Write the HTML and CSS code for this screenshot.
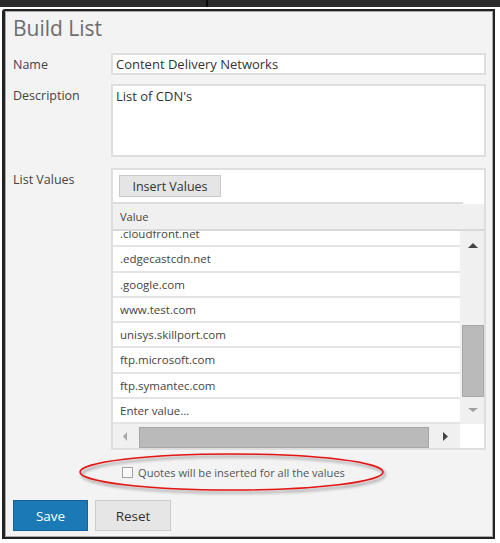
FILE: index.html
```html
<!DOCTYPE html>
<html>
<head>
<meta charset="utf-8">
<link rel="stylesheet" href="styles.css">
</head>
<body>
<div class="topbar"><span class="topbar-gap"></span><span class="topbar-line"></span></div>
<div class="frame">
  <div class="panel">
    <h1 class="title">Build List</h1>
    <div class="form">
      <label class="label">Name</label>
      <div class="field input">Content Delivery Networks</div>

      <label class="label">Description</label>
      <div class="field textarea">List of CDN's</div>

      <label class="label label-list">List Values</label>
      <div class="field listbox">
        <div class="tabstrip"><button class="tab">Insert Values</button></div>
        <div class="header">Value</div>
        <div class="body">
          <div class="rows">
            <div class="row first">.cloudfront.net</div>
            <div class="row">.edgecastcdn.net</div>
            <div class="row">.google.com</div>
            <div class="row">www.test.com</div>
            <div class="row">unisys.skillport.com</div>
            <div class="row">ftp.microsoft.com</div>
            <div class="row">ftp.symantec.com</div>
            <div class="row">Enter value...</div>
          </div>
          <div class="vscroll">
            <svg class="arrow-up" width="10" height="5" viewBox="0 0 10 5"><polygon points="5,0 10,5 0,5" fill="#444"/></svg>
            <div class="vthumb"></div>
            <svg class="arrow-down" width="10" height="4" viewBox="0 0 10 4"><polygon points="0,0 10,0 5,4" fill="#a0a0a0"/></svg>
          </div>
        </div>
        <div class="hbar">
          <div class="htrack">
            <svg class="arrow-left" width="4" height="9" viewBox="0 0 4 9"><polygon points="4,0 4,9 0,4.5" fill="#a8a8a8"/></svg>
            <div class="hthumb"></div>
            <svg class="arrow-right" width="5" height="9" viewBox="0 0 5 9"><polygon points="0,0 5,4.5 0,9" fill="#444"/></svg>
          </div>
          <div class="corner"></div>
        </div>
      </div>

      <div class="check-row">
        <span class="checkbox"></span>
        <span class="check-text">Quotes will be inserted for all the values</span>
      </div>
    </div>
    <div class="actions">
      <button class="btn btn-primary">Save</button>
      <button class="btn btn-default">Reset</button>
    </div>
    <svg class="annotation" width="325" height="50" viewBox="0 0 325 50">
      <defs>
        <filter id="sh" x="-10%" y="-50%" width="120%" height="200%">
          <feDropShadow dx="2" dy="2.5" stdDeviation="1.4" flood-color="#000" flood-opacity="0.45"/>
        </filter>
      </defs>
      <ellipse cx="161.5" cy="24" rx="151.5" ry="18" fill="none" stroke="#e31414" stroke-width="1.6" filter="url(#sh)"/>
    </svg>
  </div>
</div>
</body>
</html>
```
FILE: styles.css
```css
* { box-sizing: border-box; }
html, body { margin: 0; padding: 0; }
body {
  width: 500px;
  height: 543px;
  background: #ffffff;
  font-family: "Open Sans", "Liberation Sans", sans-serif;
  overflow: hidden;
}
.topbar {
  height: 7px;
  background: #2c2c2c;
  display: flex;
}
.topbar-gap { width: 206px; }
.topbar-line { width: 2px; background: #0c0c0c; }

.frame {
  margin: 2px 5px 0 2px;
  border-style: solid;
  border-color: #222222;
  border-width: 2px 2px 2px 3px;
  border-top-left-radius: 3px;
}
.panel {
  position: relative;
  height: 526px;
  background: #f3f3f3;
  border: 1px solid #a9a9a9;
  padding: 0 6px 0 7px;
  display: flex;
  flex-direction: column;
}
.title {
  margin: 2px 0 0 0;
  font-size: 21px;
  line-height: 28px;
  font-weight: 400;
  color: #6d6d6d;
}
.form {
  margin-top: 11px;
  display: grid;
  grid-template-columns: 98px 1fr;
  row-gap: 9px;
}
.label {
  font-size: 12.5px;
  line-height: 18px;
  padding-top: 3px;
  color: #444444;
}
.label-list { margin-top: 2px; }
.field {
  background: #ffffff;
  border: 2px solid #dedede;
  color: #333333;
  font-size: 13px;
  line-height: 18px;
}
.input {
  height: 22px;
  padding: 0 3px;
}
.textarea {
  height: 73px;
  padding: 1px 3px;
}
.listbox {
  margin-top: 2px;
  height: 282px;
  display: flex;
  flex-direction: column;
  font-size: 11.5px;
}
.tabstrip {
  height: 34px;
  margin-right: 21px;
  padding: 5px 0 0 6px;
  border-bottom: 2px solid #dcdcdc;
}
.tab {
  display: block;
  width: 102px;
  height: 22px;
  padding: 0;
  background: #e5e5e5;
  border: 1px solid #cacaca;
  font-family: inherit;
  font-size: 12.5px;
  color: #333333;
}
.header {
  height: 27px;
  background: #f0f0f0;
  border-bottom: 2px solid #d9d9d9;
  padding-left: 7px;
  line-height: 25px;
  font-size: 11px;
  color: #444444;
}
.body {
  height: 193px;
  display: flex;
}
.rows {
  width: 347px;
  overflow: hidden;
}
.row {
  height: 25.25px;
  border-bottom: 2px solid #e4e4e4;
  padding-left: 7px;
  line-height: 23px;
  color: #444444;
}
.row.first { margin-top: -9px; }
.vscroll {
  width: 24px;
  background: #f0f0f0;
  display: flex;
  flex-direction: column;
}
.arrow-up { display: block; margin: 12px 0 0 8px; }
.vthumb {
  margin: 77px 0 0 2px;
  height: 72px;
  background: #bababa;
  border: 1px solid #a7a7a7;
}
.arrow-down { display: block; margin: 11px 0 0 8px; }
.hbar {
  height: 24px;
  display: flex;
}
.htrack {
  width: 347px;
  background: #f0f0f0;
  display: flex;
  align-items: center;
}
.arrow-left { display: block; margin-left: 10px; }
.hthumb {
  align-self: flex-end;
  margin-left: 12px;
  width: 290px;
  height: 21px;
  background: #bababa;
  border: 1px solid #a7a7a7;
}
.arrow-right { display: block; margin-left: 14px; }
.corner { flex: 1; background: #ffffff; }

.check-row {
  grid-column: 2;
  margin-top: 5px;
  padding-left: 11px;
  height: 17px;
  display: flex;
  align-items: center;
}
.checkbox {
  width: 11px;
  height: 11px;
  border: 1px solid #a3a3a3;
  background: #fafafa;
}
.check-text {
  margin-left: 5px;
  font-size: 11.1px;
  color: #555555;
}
.actions {
  margin-top: 19px;
  display: flex;
  gap: 7px;
}
.btn {
  width: 75px;
  height: 31px;
  font-family: inherit;
  font-size: 13.5px;
  padding: 0;
}
.btn-primary {
  background: #1b7ab5;
  border: 1px solid #15629a;
  color: #ffffff;
}
.btn-default {
  width: 76px;
  background: #e6e6e6;
  border: 1px solid #cbcbcb;
  color: #333333;
}
.annotation {
  position: absolute;
  left: 64px;
  top: 436px;
}
```
